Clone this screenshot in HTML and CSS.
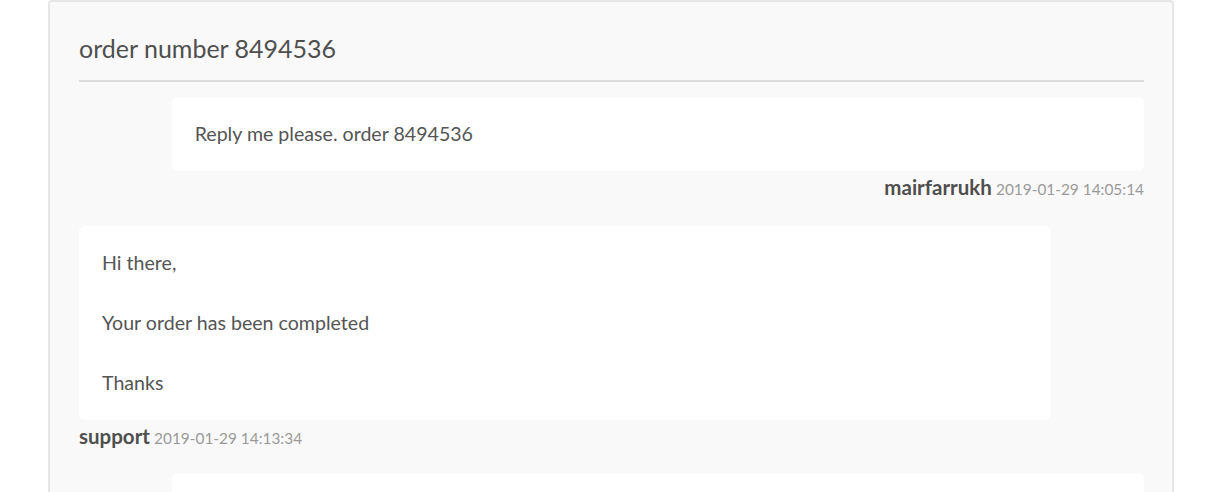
FILE: index.html
```html
<!DOCTYPE html>
<html>
<head>
<meta charset="utf-8">
<link rel="stylesheet" href="styles.css">
</head>
<body>
<div class="panel">
  <h3 class="title">order number 8494536</h3>
  <div class="thread">
    <div class="msg msg-mine">
      <div class="bubble">Reply me please. order 8494536</div>
      <div class="meta"><span class="author">mairfarrukh</span> <span class="date">2019-01-29 14:05:14</span></div>
    </div>
    <div class="msg msg-theirs">
      <div class="bubble">Hi there,<br><br>Your order has been completed<br><br>Thanks</div>
      <div class="meta"><span class="author">support</span> <span class="date">2019-01-29 14:13:34</span></div>
    </div>
    <div class="msg msg-mine msg-next">
      <div class="bubble bubble-empty"></div>
    </div>
  </div>
</div>
</body>
</html>
```
FILE: styles.css
```css
html, body {
  margin: 0;
  padding: 0;
  background: #ffffff;
  height: 492px;
  overflow: hidden;
}
body {
  font-family: "Lato", "Source Sans Pro", "Liberation Sans", sans-serif;
  color: #555555;
}
.panel {
  margin: 0 51px 0 48px;
  padding: 0 28px 0 29px;
  background: #f9f9f9;
  border: 2px solid #e6e6e6;
  border-bottom: none;
  border-radius: 4px 4px 0 0;
  min-height: 600px;
}
.title {
  margin: 30px 0 0;
  padding-bottom: 16px;
  border-bottom: 2px solid #dddddd;
  font-size: 25px;
  line-height: 32px;
  font-weight: 400;
  color: #4f4f4f;
}
.thread {
  padding-top: 15px;
  display: flex;
  flex-direction: column;
  gap: 27px;
}
.msg {
  display: flex;
  flex-direction: column;
}
.msg-mine {
  align-items: flex-end;
}
.msg-theirs {
  align-items: flex-start;
}
.msg-next {
  margin-top: -2px;
}
.bubble {
  width: 91.3%;
  box-sizing: border-box;
  background: #ffffff;
  border-radius: 6px;
  padding: 22px 23px;
  font-size: 19.6px;
  line-height: 30px;
  color: #555555;
}
.bubble-empty {
  min-height: 74px;
}
.meta {
  margin-top: 4px;
  height: 24px;
  line-height: 24px;
}
.author {
  font-weight: 700;
  font-size: 20.5px;
  color: #4f4f4f;
}
.date {
  font-size: 15.4px;
  color: #999999;
}
```
